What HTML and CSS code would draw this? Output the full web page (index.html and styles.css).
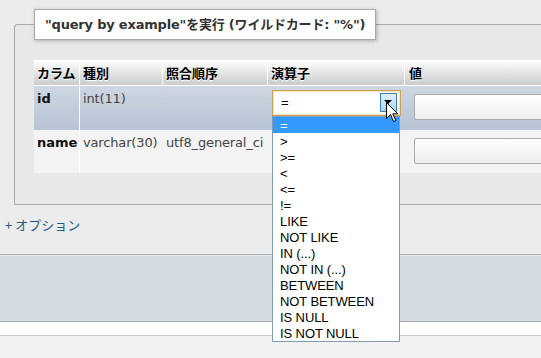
FILE: index.html
```html
<!DOCTYPE html>
<html lang="ja">
<head>
<meta charset="utf-8">
<link rel="stylesheet" href="styles.css">
</head>
<body>
<div class="fieldset">
  <div class="legend">"query by example"を実行 (ワイルドカード: "%")</div>
  <table class="qbe">
    <thead>
      <tr>
        <th class="c1">カラム</th>
        <th class="c2">種別</th>
        <th class="c3">照合順序</th>
        <th class="c4">演算子</th>
        <th class="c5">値</th>
      </tr>
    </thead>
    <tbody>
      <tr class="odd">
        <td class="name">id</td>
        <td>int(11)</td>
        <td></td>
        <td>
          <div class="select">
            <span class="sel-val">=</span>
            <span class="sel-btn"><span class="tri"></span></span>
            <svg class="cursor" width="13" height="21" viewBox="0 0 13 21"><path d="M0.5 0.5 L0.5 16.5 L4.5 12.5 L7.5 19.5 L9.8 18.5 L6.8 11.8 L11.8 11.8 Z" fill="#fff" stroke="#000" stroke-width="1" stroke-linejoin="miter"/></svg>
            <ul class="options">
              <li class="active">=</li>
              <li>&gt;</li>
              <li>&gt;=</li>
              <li>&lt;</li>
              <li>&lt;=</li>
              <li>!=</li>
              <li>LIKE</li>
              <li>NOT LIKE</li>
              <li>IN (...)</li>
              <li>NOT IN (...)</li>
              <li>BETWEEN</li>
              <li>NOT BETWEEN</li>
              <li>IS NULL</li>
              <li>IS NOT NULL</li>
            </ul>
          </div>
        </td>
        <td><div class="input"></div></td>
      </tr>
      <tr class="even">
        <td class="name">name</td>
        <td>varchar(30)</td>
        <td>utf8_general_ci</td>
        <td></td>
        <td><div class="input"></div></td>
      </tr>
    </tbody>
  </table>
</div>
<div class="options-link"><a href="#">+ オプション</a></div>
<div class="band"></div>
<div class="strip"></div>
</body>
</html>
```

FILE: styles.css
```css
html, body {
  margin: 0;
  padding: 0;
}
body {
  background: #f2f2f2;
  font-family: "DejaVu Sans", "Noto Sans CJK JP", sans-serif;
  font-size: 13px;
  color: #444;
  overflow: hidden;
  width: 541px;
  height: 358px;
}
.fieldset {
  position: relative;
  background: #e8e8e8;
  border: 1px solid #aaa;
  border-right: none;
  border-top-left-radius: 4px;
  margin: 24px -20px 0 14px;
  padding: 35px 0 31px 19px;
  box-shadow: 0 -24px 0 24px #ececec;
}
.legend {
  position: absolute;
  top: -16px;
  left: 19px;
  height: 29px;
  width: 340px;
  box-sizing: content-box;
  background: #fff;
  border: 1px solid #aaa;
  box-shadow: 1px 1px 4px rgba(0,0,0,0.25);
  font-weight: bold;
  color: #333;
  line-height: 29px;
  padding: 0;
  text-indent: 10px;
  white-space: nowrap;
  font-size: 13px;
  letter-spacing: -0.2px;
}
.qbe {
  border-collapse: separate;
  border-spacing: 0;
  width: 520px;
  table-layout: fixed;
}
.qbe th, .qbe td {
  border-right: 1px solid transparent;
  padding: 0 0 0 3px;
  text-align: left;
  vertical-align: top;
}
.qbe th {
  height: 25px;
  border-right-color: #fff;
  border-bottom: 1px solid #fff;
  background: linear-gradient(#fff, #ccc);
  background-clip: padding-box;
  color: #000;
  font-weight: bold;
  font-family: "Noto Sans CJK JP", sans-serif;
  line-height: 25px;
  text-shadow: 0 1px 0 #fff;
}
.qbe th.c5 { padding-left: 4px; border-right: none; }
.c1 { width: 42px; }
.c2 { width: 79px; }
.c3 { width: 101px; }
.c4 { width: 133px; }
.c5 { width: auto; }
.qbe td {
  padding-top: 4px;
  line-height: 17px;
  letter-spacing: -0.15px;
}
.odd td {
  height: 40px;
  background: linear-gradient(#ced7e2, #b6c4d5);
}
.even td {
  height: 39px;
  background: #f3f3f3;
}
.qbe td.name {
  font-weight: bold;
  color: #111;
  letter-spacing: 0;
  border-right-color: #fff;
  background-clip: padding-box;
}
.qbe td:last-child { border-right: none; }
.select {
  position: relative;
  margin-left: 1px;
  width: 127px;
  height: 24px;
  background: #fff;
  border: 1px solid #cda256;
  box-shadow: inset 0 0 0 1px #f2e3c4;
  font-family: "Liberation Sans", sans-serif;
  color: #000;
  letter-spacing: 0;
}
.sel-val {
  position: absolute;
  left: 8px;
  top: 3px;
  font-size: 13px;
}
.sel-btn {
  position: absolute;
  right: 3px;
  top: 2px;
  width: 15px;
  height: 17px;
  border: 1px solid #3e7fae;
  background: linear-gradient(#e1f1fc, #a8d6f4);
}
.tri {
  position: absolute;
  left: 3px;
  top: 6px;
  width: 0;
  height: 0;
  border-left: 4px solid transparent;
  border-right: 4px solid transparent;
  border-top: 4px solid #000;
}
.cursor {
  position: absolute;
  left: 113px;
  top: 11px;
  z-index: 3;
}
.options {
  position: absolute;
  top: 25px;
  left: -1px;
  width: 126px;
  margin: 0;
  padding: 0;
  list-style: none;
  background: #fff;
  border: 1px solid #7f9db9;
  z-index: 2;
}
.options li {
  height: 16px;
  line-height: 17px;
  padding-left: 7px;
  font-size: 13px;
  color: #000;
  letter-spacing: -0.1px;
}
.options li.active {
  background: #3399ff;
  color: #fff;
}
.input {
  margin: 4px 0 0 6px;
  height: 24px;
  border: 1px solid #aaa;
  border-radius: 2px;
  background: linear-gradient(#fff, #eee);
}
.options-link {
  height: 49px;
  padding-left: 5px;
  background: #ececec;
  line-height: 17px;
  box-sizing: border-box;
}
.options-link a {
  display: inline-block;
  margin-top: 11px;
  color: #235a81;
  text-decoration: none;
  font-family: "Noto Sans CJK JP", sans-serif;
}
.band {
  height: 66px;
  background: #d3dbe3;
  border-top: 1px solid #aaa;
  box-shadow: inset 0 1px 0 #e6ebf0;
  border-bottom: 1px solid #aaa;
}
.strip {
  height: 13px;
  background: #fff;
  border-bottom: 1px solid #ccc;
}
```
